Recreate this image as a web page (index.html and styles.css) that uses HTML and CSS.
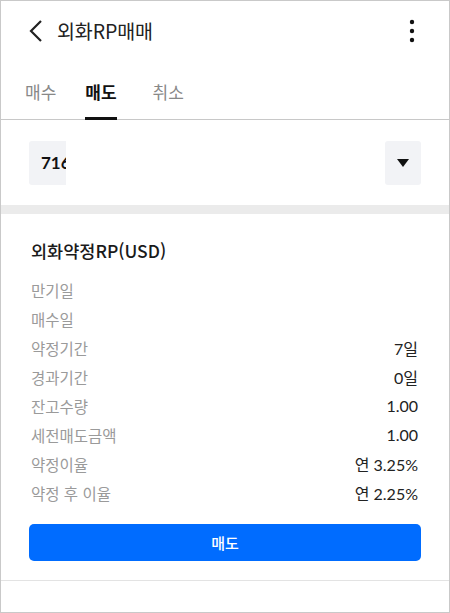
FILE: index.html
```html
<!DOCTYPE html>
<html lang="ko">
<head>
<meta charset="utf-8">
<link rel="stylesheet" href="styles.css">
</head>
<body>
<div class="screen">
  <header class="topbar">
    <svg class="back" width="16" height="24" viewBox="0 0 16 24"><path d="M13 2 L3 12 L13 22" fill="none" stroke="#222" stroke-width="2.2"/></svg>
    <div class="title">외화RP매매</div>
    <svg class="more" width="6" height="24" viewBox="0 0 6 24"><circle cx="3" cy="3" r="2.2" fill="#111"/><circle cx="3" cy="12" r="2.2" fill="#111"/><circle cx="3" cy="21" r="2.2" fill="#111"/></svg>
  </header>
  <nav class="tabs">
    <div class="tab">매수</div>
    <div class="tab active">매도</div>
    <div class="tab">취소</div>
  </nav>
  <div class="select-row">
    <div class="acct">716</div>
    <div class="drop"><svg width="12" height="8" viewBox="0 0 12 8"><path d="M0 0 H12 L6 8 Z" fill="#111"/></svg></div>
  </div>
  <div class="band"></div>
  <section class="info">
    <h2 class="prod">외화약정RP(USD)</h2>
    <div class="row"><span class="lbl">만기일</span><span class="val"></span></div>
    <div class="row"><span class="lbl">매수일</span><span class="val"></span></div>
    <div class="row"><span class="lbl">약정기간</span><span class="val">7일</span></div>
    <div class="row"><span class="lbl">경과기간</span><span class="val">0일</span></div>
    <div class="row"><span class="lbl">잔고수량</span><span class="val">1.00</span></div>
    <div class="row"><span class="lbl">세전매도금액</span><span class="val">1.00</span></div>
    <div class="row"><span class="lbl">약정이율</span><span class="val">연 3.25%</span></div>
    <div class="row"><span class="lbl">약정 후 이율</span><span class="val">연 2.25%</span></div>
    <button class="sell">매도</button>
  </section>
  <div class="bottom-line"></div>
</div>
</body>
</html>
```
FILE: styles.css
```css
* { box-sizing: border-box; margin: 0; padding: 0; }
html, body { width: 450px; height: 613px; background: #fff; }
body {
  font-family: "Noto Sans CJK KR", "Noto Sans", sans-serif;
  color: #222;
}
.screen {
  width: 450px;
  height: 613px;
  border: 1px solid #c9c9c9;
  display: flex;
  flex-direction: column;
  overflow: hidden;
}
.topbar {
  height: 59px;
  display: flex;
  align-items: center;
  padding: 0 34px 0 27px;
}
.back { flex: none; margin-right: 13px; }
.title { flex: 1; font-size: 19.5px; color: #222; letter-spacing: -0.1px; }
.more { flex: none; }
.tabs {
  height: 60px;
  display: flex;
  align-items: flex-end;
  padding-left: 24px;
  border-bottom: 1px solid #c8c8c8;
}
.tab {
  font-size: 17px;
  color: #888;
  padding-bottom: 13px;
  margin-right: 29px;
  border-bottom: 3px solid transparent;
  line-height: 24px;
  margin-bottom: -1px;
}
.tab:nth-child(2) { margin-right: 36px; }
.tab.active { color: #111; font-weight: 700; border-bottom-color: #111; }
.select-row {
  height: 85px;
  display: flex;
  align-items: center;
  justify-content: space-between;
  padding: 0 28px 0 28px;
}
.acct {
  width: 37px;
  height: 44px;
  background: #f2f3f6;
  border-radius: 3px 0 0 3px;
  overflow: hidden;
  white-space: nowrap;
  font-family: "Lato", "Noto Sans CJK KR", sans-serif;
  font-weight: 700;
  font-size: 17px;
  line-height: 44px;
  padding-left: 12px;
  color: #111;
}
.drop {
  width: 36px;
  height: 44px;
  background: #f2f3f6;
  border-radius: 3px;
  display: flex;
  align-items: center;
  justify-content: center;
}
.band { height: 9px; background: #ebebeb; flex: none; }
.info {
  padding: 24px 31px 0 30px;
  display: flex;
  flex-direction: column;
}
.prod {
  font-size: 17.5px;
  font-weight: 500;
  color: #1a1a1a;
  line-height: 26px;
  margin-bottom: 11px;
}
.row {
  display: flex;
  justify-content: space-between;
  align-items: center;
  height: 29px;
  font-size: 15.5px;
}
.lbl { color: #9a9a9a; }
.val { font-family: "Lato", "Noto Sans CJK KR", sans-serif; color: #222; font-size: 16px; }
.sell {
  margin-top: 17px;
  margin-left: -2px;
  margin-right: -3px;
  height: 37px;
  border: none;
  border-radius: 5px;
  background: #006cff;
  color: #fff;
  font-family: "Noto Sans CJK KR", sans-serif;
  font-size: 15px;
  font-weight: 500;
}
.bottom-line { margin-top: 19px; height: 1px; background: #e3e3e3; }
```
